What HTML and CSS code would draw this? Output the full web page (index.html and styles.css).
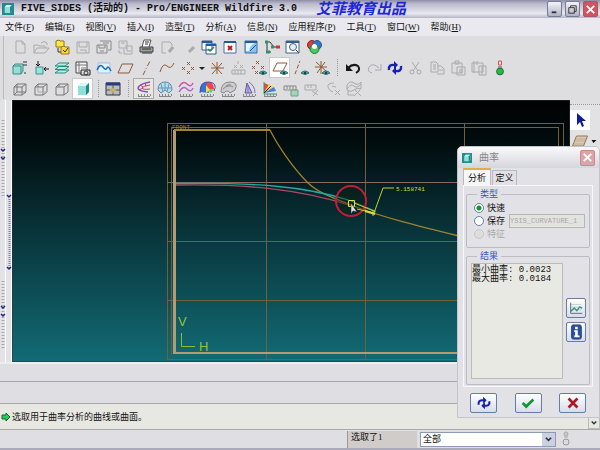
FILE: index.html
```html
<!DOCTYPE html>
<html lang="zh-CN">
<head>
<meta charset="utf-8">
<title>FIVE_SIDES (活动的) - Pro/ENGINEER Wildfire 3.0</title>
<link rel="stylesheet" href="styles.css">
</head>
<body>
<svg class="defs" aria-hidden="true">
  <symbol id="cube" viewBox="0 0 18 18"><path d="M3 7h8v8H3zM3 7l3-3h9l-4 3M15 4v8l-4 3M6 4v3"/></symbol>
  <symbol id="solid" viewBox="0 0 18 18"><path fill="#8fe0d8" stroke="none" d="M4 6l3-3h8v9l-3 3H4z"/><path fill="#d4fbf4" stroke="none" d="M4 6l3-3h8l-3 3z"/><path fill="#228a88" stroke="none" d="M12 6l3-3v9l-3 3z"/></symbol>
  <symbol id="eye" viewBox="0 0 18 18"><path fill="#58a8a0" stroke="#376f70" d="M9 14q4-4 8 0-4 3-8 0z"/><circle cx="13" cy="14" r="1.2" fill="#174647" stroke="none"/></symbol>
  <symbol id="ruler" viewBox="0 0 18 18"><path fill="none" stroke="#888" d="M3 16.500h12M3.500 14v2M6.500 14v2M9.500 14v2M12.500 14v2M15.500 14v2"/></symbol>
  <symbol id="cycle" viewBox="0 0 18 18"><path fill="none" stroke="#1420b8" stroke-width="2.4" d="M3 11q-1-6 6-5M15 7q1 6-6 5"/><path fill="#1420b8" stroke="none" d="M8 2l4 4-4 4zM10 8l-4 4 4 4z"/></symbol>
  <symbol id="chev" viewBox="0 0 8 8"><path fill="none" stroke="#303848" stroke-width="2" d="M1 2l3 3 3-3"/></symbol>
</svg>
<div class="app">
  <header class="titlebar">
    <svg class="logo" viewBox="0 0 18 18"><use href="#solid"/></svg>
    <h1>FIVE_SIDES (活动的) - Pro/ENGINEER Wildfire 3.0</h1>
    <span class="brand">艾菲教育出品</span>
    <div class="winbtns">
      <button aria-label="最小化"><svg viewBox="0 0 14 14"><path d="M4 10h5" stroke-width="2"/></svg></button>
      <button aria-label="还原"><svg viewBox="0 0 14 14"><path d="M5 5V3h6v6H9M3 5h6v6H3z"/></svg></button>
      <button class="close" aria-label="关闭"><svg viewBox="0 0 14 14"><path d="M3 3l8 8M11 3l-8 8" stroke-width="2"/></svg></button>
    </div>
  </header>
  <nav class="menubar">
    <button>文件(<u>F</u>)</button><button>编辑(<u>E</u>)</button><button>视图(<u>V</u>)</button><button>插入(<u>I</u>)</button><button>造型(<u>T</u>)</button><button>分析(<u>A</u>)</button><button>信息(<u>N</u>)</button><button>应用程序(<u>P</u>)</button><button>工具(<u>T</u>)</button><button>窗口(<u>W</u>)</button><button>帮助(<u>H</u>)</button>
  </nav>
  <div class="toolbars">
    <div class="toolbar">
      <button aria-label="新建"><svg class="off" viewBox="0 0 18 18"><path d="M5 3h6l3 3v9H5zM11 3v3h3"/></svg></button>
      <button aria-label="打开"><svg class="off" viewBox="0 0 18 18"><path d="M2 15V7h4l1 1h6v2M2 15l3-5h12l-4 5zM9 5q3-3 6 0v2"/></svg></button>
      <button aria-label="工作目录"><svg viewBox="0 0 18 18"><path fill="#ffe64d" stroke="#8a7410" d="M3 3l3-1 1 1h4v6H3z"/><path fill="#ffd633" stroke="#967a10" d="M8 9l3-1 1 1h4v7H8z"/><path d="M5 10v4h3M10 12l2 2 3-4" stroke="#333"/></svg></button>
      <button aria-label="保存"><svg class="off" viewBox="0 0 18 18"><path d="M3 4h12v11H3zM5 4v5h8V4M6 12h6v3"/></svg></button>
      <button aria-label="备份"><svg class="off" viewBox="0 0 18 18"><path stroke="#888" d="M5 3h11v9h-3M2 7h10v8H2zM4 7v3h6V7M8 5h6M5 13h4"/></svg></button>
      <button aria-label="保存副本"><svg class="off" viewBox="0 0 18 18"><path d="M3 3h8v7H3zM9 8h7v8H8v-5M5 5h4M11 10v3h4M3 12v3h3"/></svg></button>
      <button aria-label="打印"><svg viewBox="0 0 18 18"><path fill="#fff" stroke="#555" d="M5 9l2-7h7l-2 7"/><path fill="#9aa09a" stroke="#444" d="M3 9h13v5H3z"/><path stroke="#333" d="M5 15h10M5 11h9M8 4h4M8 6h3"/></svg></button>
      <button aria-label="邮件"><svg class="off" viewBox="0 0 18 18"><path d="M12 4H4v11h4M12 4l2 2v2"/><path d="M11 14l4-5" stroke-width="3"/></svg></button>
      <button aria-label="链接"><svg class="off" viewBox="0 0 18 18"><path d="M10 14l5-5" stroke-width="3"/></svg></button>
      <button aria-label="激活窗口"><svg viewBox="0 0 18 18"><path fill="#fff" stroke="#305a91" d="M2 3h10v9H2zM6 6h10v10H6z"/><path stroke="#1e5ba2" stroke-width="2" d="M2 4h10M6 7h10"/><path stroke="#2b8b47" stroke-width="1.5" d="M8 11l2 2 4-4"/></svg></button>
      <button aria-label="关闭窗口"><svg viewBox="0 0 18 18"><path fill="#fff" stroke="#45709d" d="M3 4h12v11H3z"/><path stroke="#1e5ba2" stroke-width="2" d="M3 4h12"/><path stroke="#b31e24" stroke-width="2" d="M7 8l4 4M11 8l-4 4"/></svg></button>
      <button aria-label="重画"><svg viewBox="0 0 18 18"><path fill="#8ac2ee" stroke="#396ca6" d="M3 3h12v12H3z"/><path fill="#e8f6ff" stroke="none" d="M4 5h9q-5 2-6 8H4z"/><path stroke="#1e5ba2" stroke-width="2" d="M3 4h12"/><path stroke="#1e5ba2" d="M8 13l6-6"/></svg></button>
      <button aria-label="模型树"><svg viewBox="0 0 18 18"><path stroke="#333" d="M4 4v10M4 4h3l4 5h5M4 14h4"/><path stroke="#279568" stroke-width="3" d="M2 4h3M3 14h4M8 9h3"/><path stroke="#d03040" stroke-width="3" d="M13 9h4"/></svg></button>
      <button aria-label="查看"><svg viewBox="0 0 18 18"><path fill="#fff" stroke="#41648e" d="M2 3h13v12H2z"/><path stroke="#315d91" stroke-width="2" d="M2 4h13"/><circle cx="9" cy="9" r="3.5" fill="#dff1ff" stroke="#4e5f71"/><path stroke="#444" d="M12 12l3 3"/></svg></button>
      <button aria-label="颜色"><svg viewBox="0 0 18 18"><circle cx="7" cy="7" r="4.5" fill="#d83f3f" stroke="#9a1826"/><circle cx="12" cy="7" r="4.500" fill="#3575c7" stroke="#22599b"/><circle cx="9.500" cy="11" r="4.5" fill="#4dc660" stroke="#16843d"/><circle cx="9.500" cy="8.500" r="2.500" fill="#fff" stroke="none"/></svg></button>
    </div>
    <div class="toolbar">
      <button aria-label="基准显示"><svg viewBox="0 0 18 18"><path fill="#98ddd2" stroke="#3b8b8a" d="M2 7h8v8H2zM2 7l2-2h8v7l-2 3"/><path stroke="#333" stroke-dasharray="2 1" d="M13 2v5M15 2v5M13 14h3"/></svg></button>
      <button aria-label="方向"><svg viewBox="0 0 18 18"><path fill="#9ae3d8" stroke="#37918b" d="M4 8h7v7H4z"/><path stroke="#111" d="M6 2v5M4 5l2 2 2-2M17 10h-5M14 8l-2 2 2 2"/></svg></button>
      <button aria-label="图层"><svg viewBox="0 0 18 18"><path fill="#b7eee2" stroke="#258b80" d="M2 14l4-3h10l-4 3zM2 10.500l4-3h10l-4 3zM2 7l4-3h10l-4 3z"/></svg></button>
      <button aria-label="视图管理器"><svg viewBox="0 0 18 18"><path fill="#f5f5f5" stroke="#444" d="M2 3h11v11H2z"/><path stroke="#777" d="M2 6h11M5 3v11M7 9h5"/><path fill="#ddd" stroke="#222" d="M7 11h9v5H7z"/><circle cx="12" cy="14" r="2"/></svg></button>
      <button aria-label="草绘"><svg viewBox="0 0 18 18"><path fill="#e2f2ff" stroke="#9bbfdf" d="M3 4h12v10H3z"/><path stroke="#176dbb" stroke-width="1.5" d="M2 11q3-7 6-3t4 1 4 3"/></svg></button>
      <button aria-label="平面"><svg class="brown" viewBox="0 0 18 18"><path d="M2 14L6 5h11l-4 9z"/></svg></button>
      <button aria-label="轴"><svg class="brown" viewBox="0 0 18 18"><path stroke-dasharray="5 2 1 2" d="M6 16L13 2"/></svg></button>
      <button aria-label="曲线"><svg class="brown" viewBox="0 0 18 18"><path d="M2 13q3-10 7-6t7-3"/></svg></button>
      <button aria-label="点"><svg class="brown" viewBox="0 0 18 18"><path d="M8 3l3 3m0-3L8 6M3 8l3 3m0-3l-3 3M12 8l3 3m0-3l-3 3M8 12l3 3m0-3l-3 3"/></svg></button>
      <button class="drop" aria-label="更多点"><svg viewBox="0 0 8 18"><path fill="#222" stroke="none" d="M1 8h6L4 11z"/></svg></button>
      <button aria-label="坐标系"><svg class="brown" viewBox="0 0 18 18"><path d="M4 4l10 11M14 4L4 15M9 3v12M3 9h13"/></svg></button>
      <button aria-label="分析特征"><svg class="off" viewBox="0 0 18 18"><path d="M3 11h13v4H3zM6 11v4M9 11v4M12 11v4M9 2v3M5 6l3 3m0-3L5 9M11 6l3 3m0-3l-3 3"/></svg></button>
      <button aria-label="点显示"><svg class="brown" viewBox="0 0 18 18"><path d="M6 2l3 3m0-3L6 5M2 7l3 3m0-3l-3 3M11 7l3 3m0-3l-3 3M5 12l3 3m0-3l-3 3"/><use href="#eye"/></svg></button>
      <button class="active" aria-label="平面显示"><svg class="brown" viewBox="0 0 18 18"><path d="M2 12L6 4h10l-4 8z"/><use href="#eye"/></svg></button>
      <button aria-label="轴显示"><svg class="brown" viewBox="0 0 18 18"><path stroke-dasharray="4 2" d="M3 15L8 2"/><use href="#eye"/></svg></button>
      <button aria-label="坐标显示"><svg class="brown" viewBox="0 0 18 18"><path d="M3 3l11 10M12 3L4 14M8 2v13M2 8h12"/><use href="#eye"/></svg></button>
      <i class="sep"></i>
      <button aria-label="撤消"><svg viewBox="0 0 18 18"><path stroke="#171717" stroke-width="2" d="M4 9q5-5 10-2 3 4-2 7"/><path fill="#171717" stroke="none" d="M2 5v7h7z"/></svg></button>
      <button aria-label="重做"><svg class="off" viewBox="0 0 18 18"><path d="M14 9Q8 3 4 8q-2 5 3 6M16 5v6h-6"/></svg></button>
      <button aria-label="再生"><svg viewBox="0 0 18 18"><use href="#cycle"/></svg></button>
      <button aria-label="剪切"><svg class="off" viewBox="0 0 18 18"><path d="M5 3l6 9M12 3l-6 9"/><circle cx="5" cy="13" r="2"/><circle cx="12" cy="13" r="2"/></svg></button>
      <button aria-label="复制"><svg class="off" viewBox="0 0 18 18"><path d="M3 3h5l2 2v8H3zM9 7h4l3 3v5H9M5 6h3M5 8h3M5 10h3M11 11h4"/></svg></button>
      <button aria-label="粘贴"><svg class="off" viewBox="0 0 18 18"><path d="M3 4h10v10H3zM6 2h4v3H6zM8 8h8v8H8zM10 11h4M10 13h4"/></svg></button>
      <button aria-label="选择性粘贴"><svg class="off" viewBox="0 0 18 18"><path d="M2 4h11v9H2zM4 2v12M7 2v4M9 7h7v9H9zM12 7v9"/></svg></button>
      <button aria-label="再生状态"><svg viewBox="0 0 18 18"><path stroke="#c55" d="M7.500 2h3v4h-3z"/><path stroke="#555" d="M7 8h4"/><circle cx="9" cy="12.500" r="3.4" fill="#2eb448" stroke="#17762a"/></svg></button>
    </div>
    <div class="toolbar">
      <button aria-label="线框"><svg class="wire" viewBox="0 0 18 18"><use href="#cube"/><path d="M6 7v5h9M3 15l3-3"/></svg></button>
      <button aria-label="隐藏线"><svg class="wire" viewBox="0 0 18 18"><use href="#cube"/><path stroke="#aaa" d="M6 7v5h9"/></svg></button>
      <button aria-label="无隐藏线"><svg class="wire" viewBox="0 0 18 18"><use href="#cube"/></svg></button>
      <button class="active" aria-label="着色"><svg viewBox="0 0 18 18"><use href="#solid"/></svg></button>
      <i class="sep narrow"></i>
      <button aria-label="四视图"><svg viewBox="0 0 18 18"><path fill="#bbb" stroke="#334" d="M2 3h14v12H2z"/><path stroke="#253e7b" stroke-width="3" d="M2 4h14"/><path stroke="#555" d="M9 5v10M2 10h14"/><path stroke="#e5cf55" d="M9 8v5M6 10h6"/></svg></button>
      <i class="sep"></i>
      <button class="active soft" aria-label="曲率"><svg viewBox="0 0 18 18"><path stroke="#7d4fc0" stroke-width="1.500" d="M15 2Q4 4 3 8q0 3 10 4"/><path stroke="#c23f61" d="M15 5Q8 6 7 8q1 2 8 1M5 5l3 2M4 10l4-2M10 3l1 3"/><use href="#ruler"/></svg></button>
      <button aria-label="截面"><svg viewBox="0 0 18 18"><path fill="#b9dcec" stroke="#5590b2" d="M2 10q0-8 7-8t7 8l-3 3-4-3-4 3z"/><path stroke="#6898b6" d="M5 4l2 8M9 2v8M13 4l-2 8M3 8h12"/><use href="#ruler"/></svg></button>
      <button aria-label="偏移"><svg viewBox="0 0 18 18"><path stroke="#d252a7" stroke-width="1.5" d="M2 7q4-7 8-3t6-1"/><path stroke="#b163c9" stroke-width="1.5" d="M2 12q4-7 8-3t6-1"/><use href="#ruler"/></svg></button>
      <button aria-label="着色曲率"><svg viewBox="0 0 18 18"><path fill="#3472d3" stroke="none" d="M2 12Q1 2 9 2l2 11z"/><path fill="#ee4550" stroke="none" d="M8 2q8-1 8 7l-5 2z"/><path fill="#61ce70" stroke="none" d="M8 9h8l-3 4z"/><path fill="#f4dc47" stroke="none" d="M8 5l4 5-4 3z"/><path stroke="#5648a0" d="M2 13q0-12 9-11t5 9"/><use href="#ruler"/></svg></button>
      <button aria-label="反射"><svg class="gray" viewBox="0 0 18 18"><path fill="#ccc" d="M2 12q0-10 9-10t5 8l-5 3q-3-4-6 0z"/><path d="M4 9q5-5 10-2M7 6q3-2 5-1"/><use href="#ruler"/></svg></button>
      <button aria-label="拔模"><svg viewBox="0 0 18 18"><path fill="#b9b4e5" stroke="#5f559e" d="M7 3l5 10H5z"/><path stroke="#7c70ad" d="M8 5v8M9 2q6 4 6 11"/><use href="#ruler"/></svg></button>
      <button aria-label="斜率"><svg viewBox="0 0 18 18"><path fill="#e8473c" stroke="none" d="M3 13V3l5 2z"/><path fill="#f4d94a" stroke="none" d="M8 4l5 3-10 6z"/><path fill="#4a7fd4" stroke="none" d="M13 7l2 4-12 2z"/><path stroke="#397" d="M3 2v12h13"/><path stroke="#222" d="M3 13l7-7"/><use href="#ruler"/></svg></button>
      <button aria-label="测量保存"><svg class="gray" viewBox="0 0 18 18"><path d="M2 6h12v4H2zM5 6v3M8 6v3M11 6v3"/><path fill="#a7d1b8" stroke="#6ba287" d="M9 10h7v6H9z"/></svg></button>
      <button aria-label="测量隐藏"><svg class="off" viewBox="0 0 18 18"><path d="M2 5h11v5H2zM5 5v3M8 5v3M9 11l6 4M15 10l-5 6" /></svg></button>
      <button aria-label="删除曲率"><svg class="off" viewBox="0 0 18 18"><path d="M10 3Q3 3 4 7q1 4 5 5M11 10l5 5M16 10l-5 5M8 6l4 1"/></svg></button>
      <button aria-label="删除截面"><svg class="off" viewBox="0 0 18 18"><path d="M2 5q3-5 7-2t7-1v7q-4-2-7 1t-7 0zM2 9q4-6 7-3t7-2M3 11v4h6M10 10l6 6M15 10l-6 6"/></svg></button>
    </div>
  </div>
  <main class="workspace">
    <aside class="leftrail">
      <svg viewBox="0 0 12 262">
        <path stroke="#aaa" stroke-width="3" stroke-dasharray="1 2" d="M3 20v77M3 181v69"/>
        <path stroke="#777e9a" stroke-width="2" stroke-dasharray="1 1" d="M9.500 99v69"/>
        <path stroke="#fff" d="M5.500 0v262M11.500 0v262"/>
        <path stroke="#24248a" stroke-width="1.500" fill="none" d="M1 49l2 2 2-2M1 57l2 2 2-2M7 95l2 2 2-2M7 167l2 2 2-2M1 206l2 2 2-2M1 214l2 2 2-2"/>
      </svg>
    </aside>
    <svg class="view" viewBox="12 100 558 262" preserveAspectRatio="xMinYMin slice" role="img" aria-label="曲率图形">
      <defs><linearGradient id="sky" x2="0" y2="1"><stop stop-color="#000202"/><stop offset=".15" stop-color="#010b0d"/><stop offset=".5" stop-color="#08343a"/><stop offset="1" stop-color="#126b75"/></linearGradient></defs>
      <path fill="url(#sky)" d="M12 100h558v262H12z"/>
      <g fill="none" shape-rendering="crispEdges">
        <path stroke="#725f3c" d="M167.500 359.500v-236h396v236zM171.500 355V127.500h387V355M266.500 123v236M365.500 123v236M464.500 123v236M167 241.500h396M167 300.500h396"/>
        <path stroke="#8d675e" d="M167 182.500h396"/>
        <path stroke="#b49b73" stroke-width="3" d="M174.500 130v223"/>
        <path stroke="#b49b73" stroke-width="2" d="M173 353h390"/>
        <path stroke="#a58133" stroke-width="2" d="M174 130h96"/>
      </g>
      <g fill="none">
        <path stroke="#a18228" stroke-width="1.300" d="M270 130C278 146 293 168 308 183c13 12 31 17 43 22 30 12 71 22 108 31"/>
        <path stroke="#20a99f" stroke-width="1.300" d="M176 183.500c75-1 127 2 174 17l26 11"/>
        <path stroke="#a64a67" stroke-width="1.300" d="M176 185c65-1 121 3 176 21"/>
        <circle cx="351" cy="201" r="15" fill="#10200b" fill-opacity=".35" stroke="#c51d37" stroke-width="2"/>
        <path stroke="#c9ce2c" d="M354 203l20 8M357 209l17 4M374 213l9-25h11M373 210v6"/>
        <path stroke="#d9d843" stroke-width="2" d="M365 211l10 3"/>
        <path stroke="#e1df58" d="M348.500 200.500h6v6h-6z"/>
        <path fill="#dce5db" stroke="#182018" stroke-width=".5" d="M351 203v11l2-3 4 1z"/>
      </g>
      <path fill="none" stroke="#8bbd39" d="M181.500 333v13.500H195"/>
      <text class="value" x="396" y="191">5.158741</text>
      <text class="axis" x="178" y="326">V</text><text class="axis" x="199" y="351">H</text>
      <text class="plane" x="172" y="129">FRONT</text>
    </svg>
    <aside class="rightrail">
      <button class="active" aria-label="选取"><svg viewBox="0 0 18 18"><path fill="#0c1c91" stroke="none" d="M6 2v12l3-3 2 5 2-1-2-5h4z"/></svg></button>
      <button class="planebtn" aria-label="基准平面"><svg viewBox="0 0 27 18"><path fill="#dccbb4" stroke="#907958" d="M2 14L6 4h11l-4 10z"/><path stroke="#a18b6b" stroke-dasharray="1 1" d="M6 7h9M5 9h9M4 12h9"/><path fill="#111" stroke="none" d="M21 8h5l-3 3z"/></svg></button>
    </aside>
  </main>
  <div class="dashboard"></div>
  <div class="dashboard second"></div>
  <div class="message">
    <svg viewBox="0 0 10 10"><path fill="#28cb59" stroke="#176235" d="M1 3h4V1l4 4-4 4V7H1z"/></svg>
    <p>选取用于曲率分析的曲线或曲面。</p>
    <button aria-label="展开消息"><svg viewBox="0 0 8 8"><use href="#chev"/></svg></button>
  </div>
  <footer class="status">
    <output>选取了1</output>
    <div class="filter"><select aria-label="选取过滤器"><option>全部</option></select><svg viewBox="0 0 8 8"><use href="#chev"/></svg></div>
    <svg class="light" viewBox="0 0 10 16"><circle cx="5" cy="3" r="2" fill="#ccc" stroke="#aaa"/><path stroke="#aaa" d="M3 6h4"/><circle cx="5" cy="11" r="3" fill="#ddd" stroke="#999"/></svg>
  </footer>
</div>

<section class="dialog" role="dialog" aria-labelledby="dialog-title">
  <header>
    <svg class="logo" viewBox="0 0 18 18"><use href="#solid"/></svg>
    <h2 id="dialog-title">曲率</h2>
    <button class="close" aria-label="关闭曲率"><svg viewBox="0 0 14 14"><path d="M3 3l8 8M11 3l-8 8" stroke-width="2"/></svg></button>
  </header>
  <div class="tabs" role="tablist"><button role="tab" aria-selected="true">分析</button><button role="tab" aria-selected="false">定义</button></div>
  <div class="panel">
    <fieldset class="kind">
      <legend>类型</legend>
      <label><input type="radio" name="kind" checked>快速</label>
      <div class="saverow"><label><input type="radio" name="kind">保存</label><input class="name" type="text" aria-label="分析名称" value="YSIS_CURVATURE_1" disabled></div>
      <label class="disabled"><input type="radio" name="kind" disabled>特征</label>
    </fieldset>
    <fieldset class="result">
      <legend>结果</legend>
      <div class="resultrow">
        <textarea aria-label="结果" readonly>最小曲率: 0.0023
最大曲率: 0.0184</textarea>
        <div class="side">
          <button aria-label="图形"><svg viewBox="0 0 18 18"><path stroke="#b7d1cf" d="M3 5h12M3 8h12M3 11h12"/><path stroke="#52666e" d="M3 3v12h13"/><path stroke="#3a9276" stroke-width="1.500" d="M3 13l4-4 3 3 3-4 3 1"/></svg></button>
          <button aria-label="信息"><svg viewBox="0 0 18 18"><rect x="4" y="1" width="11" height="16" rx="2" fill="#2c50a2" stroke="#203e86"/><path fill="#fff" stroke="none" d="M8 3h3v3H8zM7 7h4v6h2v2H7v-2h1V9H7z"/></svg></button>
        </div>
      </div>
    </fieldset>
  </div>
  <div class="actions">
    <button aria-label="重复"><svg viewBox="0 0 18 18"><use href="#cycle"/></svg></button>
    <button aria-label="确定"><svg viewBox="0 0 18 18"><path stroke="#119631" stroke-width="3" d="M3 9l4 4 8-8"/></svg></button>
    <button aria-label="取消"><svg viewBox="0 0 18 18"><path stroke="#aa1921" stroke-width="3" d="M4 4l10 10M14 4L4 14"/></svg></button>
  </div>
</section>
</body>
</html>
```
FILE: styles.css
```css
* { box-sizing: border-box; }
body { margin: 0; background: #dedee3; color: #111; font: 9px/12px "Liberation Serif", "Noto Sans CJK SC", sans-serif; }
button, input, select, textarea { font: inherit; color: inherit; margin: 0; padding: 0; }
button { border: 0; background: none; display: flex; align-items: center; justify-content: center; }
svg { display: block; fill: none; stroke: #333; flex: none; }
h1, h2, p { margin: 0; }
.defs { position: absolute; width: 0; height: 0; }
.app { min-height: 100vh; display: flex; flex-direction: column; }

.titlebar { height: 18px; display: flex; align-items: center; padding: 0 2px; background: linear-gradient(#8e8ea9, #b9b9cb 20%, #e8e8f0 75%, #b5b5c4); }
.logo { width: 12px; height: 12px; background: #228c8c; }
.titlebar .logo { margin-right: 7px; }
h1 { font: bold 10px/16px "Liberation Mono", "Noto Sans CJK SC", monospace; white-space: nowrap; }
.brand { margin-left: 19px; font: italic bold 15px/18px "Liberation Serif", "Noto Sans CJK SC", sans-serif; color: #1f25d8; white-space: nowrap; }
.winbtns { margin-left: auto; display: flex; gap: 3px; }
.winbtns button, .close { width: 15px; height: 16px; border: 1px solid #777b94; border-radius: 2px; background: linear-gradient(#f4f4fb, #aeb1c4); }
.winbtns svg, .close svg { width: 13px; height: 13px; }
.winbtns .close, .close { border-color: #a75765; background: #cf5563; }
.close svg { stroke: #fff; }

.menubar { height: 18px; display: flex; align-items: center; gap: 11px; padding-left: 5px; background: #e9e9ef; }
.menubar button { display: block; white-space: nowrap; }

.toolbars { padding-bottom: 1px; background: #dedee0; }
.toolbar { display: flex; height: 21px; padding-left: 9px; background: linear-gradient(90deg, transparent 3px, #bbb 3px, #bbb 4px, transparent 4px); }
.toolbar button { width: 21px; height: 21px; }
.toolbar svg { width: 18px; height: 18px; }
.toolbar .drop { width: 8px; }
.toolbar .drop svg { width: 8px; }
.toolbar .active, .rightrail .active { background: #fff; border: 1px solid #c8c8c8; }
.toolbar .soft { background: #e7e7e2; border-color: #aaa; }
.off { stroke: #aaa; }
.gray { stroke: #888; }
.wire { stroke: #777; }
.brown { stroke: #925a35; }
.sep { margin: 2px 4px 2px 5px; border-left: 1px dotted #999; }
.narrow { margin-right: 3px; }

.workspace { flex: 1; display: grid; grid-template-columns: 12px minmax(0, 1fr) 30px; min-height: 200px; }
.leftrail { background: #e3e3e7; }
.leftrail svg { width: 12px; }
.view { width: 100%; height: 100%; min-height: 0; }
.view text { stroke: none; }
.value { font: 6px "Liberation Mono", monospace; fill: #d4df37; }
.axis { font: 13px "Liberation Sans", sans-serif; fill: #91c33d; }
.plane { font: 6px "Liberation Mono", monospace; fill: #a87a32; }
.rightrail { background: #e2e2e5; border-top: 1px dotted #999; margin-top: 4px; padding-top: 5px; }
.rightrail .active { width: 20px; height: 20px; border: 0; }
.rightrail .active svg { width: 18px; height: 18px; }
.planebtn { margin-top: 2px; }
.planebtn svg { width: 28px; height: 18px; }

.dashboard { height: 20px; border-top: 2px solid #eee; border-bottom: 1px solid #a7a7b0; }
.dashboard.second { height: 22px; border-top: 0; }
.message { height: 26px; display: flex; align-items: center; gap: 1px; padding-left: 1px; background: #e8e8e2; border-bottom: 1px solid #aaa; }
.message svg { width: 10px; height: 10px; }
.message button { align-self: flex-end; margin-left: auto; width: 12px; height: 12px; border: 1px solid #bbb; }
.message button svg { width: 6px; height: 6px; }
.status { height: 20px; display: flex; align-items: center; padding: 0 29px 0 347px; border-bottom: 2px solid #aab; }
.status output { flex: 1; height: 17px; padding: 0 3px; border-left: 1px solid #999; background: #d0ccc9; }
.filter { width: 136px; height: 15px; margin-left: 3px; display: flex; align-items: center; background: #fff; border: 1px solid #8c9bb5; }
.filter select { width: 100%; height: 13px; padding: 0 2px; border: 0; background: transparent; appearance: none; }
.filter svg { width: 13px; height: 13px; padding: 3px; background: #ccd0e0; }
.light { width: 10px; height: 16px; margin-left: 5px; }

.dialog { position: absolute; right: 0; top: 146px; width: 143px; padding: 0 6px 4px 5px; background: #e2e2e6; border: 1px solid #c4c4cc; border-radius: 5px 5px 0 0; }
.dialog > header { height: 21px; display: flex; align-items: center; gap: 7px; margin: 0 -6px 0 -5px; padding: 0 4px; background: linear-gradient(#fafafb, #d5d5dd); border-radius: 4px 4px 0 0; }
.dialog .logo { width: 10px; height: 10px; }
h2 { font-size: 10px; font-weight: normal; color: #858589; }
.dialog .close { margin-left: auto; background: #dba4aa; border-color: #cc8790; }
.tabs { display: flex; align-items: flex-end; gap: 1px; }
.tabs button { width: 25px; height: 15px; border: 1px solid #b9b9c1; border-bottom: 0; }
.tabs button[aria-selected="true"] { width: 28px; height: 17px; border-top: 2px solid #e2ad45; background: #f6f6f8; }
.panel { padding: 2px 2px 1px; border: 1px solid #f8f8fa; }
fieldset { margin: 0; min-width: 0; border: 1px solid #bcbcc5; border-radius: 2px; }
legend { margin-left: 6px; padding: 0 3px; color: #3555c5; }
.kind { height: 60px; padding: 2px 4px; }
.kind label { display: flex; align-items: center; gap: 3px; height: 12px; }
.kind .disabled { color: #aaa; }
input[type="radio"] { appearance: none; width: 10px; height: 10px; margin-left: 3px; border: 1px solid #6382a3; border-radius: 50%; background: #fff; }
input[type="radio"]:checked { background: radial-gradient(#169329 2px, #fff 3px); }
input[type="radio"]:disabled { border-color: #c7c7c7; background: #ddd; }
.saverow { display: flex; align-items: center; gap: 4px; }
.name { width: 76px; height: 14px; min-width: 0; border: 1px solid #b7b7b7; background: #e2e2df; color: #a9a9a9; font: 7px/12px "Liberation Mono", monospace; }
.result { margin-top: 2px; padding: 1px 3px 5px 4px; }
.resultrow { display: flex; gap: 3px; }
textarea { width: 93px; height: 116px; padding-top: 2px; border: 1px solid #bbb; background: #e9e9e4; resize: none; overflow: hidden; font: 9px/9px "Liberation Mono", "Noto Sans CJK SC", monospace; }
.side { display: grid; align-content: start; gap: 4px; padding-top: 35px; }
.side button, .actions button { height: 20px; border: 1px solid #647ea6; border-radius: 2px; background: linear-gradient(#fff, #d9dce9); }
.side button { width: 20px; }
.side svg, .actions svg { width: 16px; height: 16px; }
.actions { display: flex; justify-content: space-between; padding: 6px 7px 0; }
.actions button { width: 27px; }
```
